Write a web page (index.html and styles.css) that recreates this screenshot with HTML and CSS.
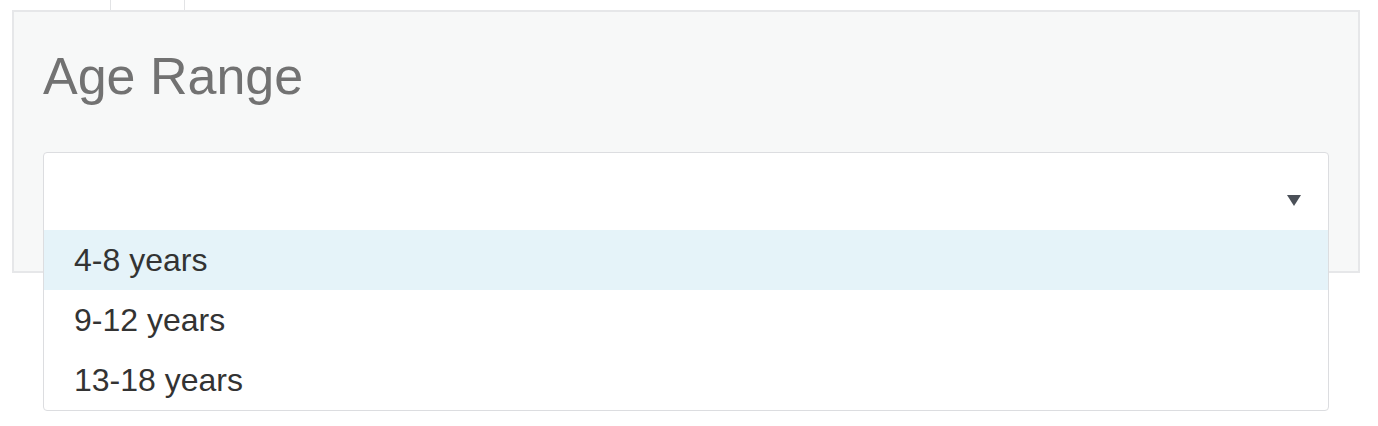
FILE: index.html
```html
<!DOCTYPE html>
<html lang="en">
<head>
    <meta charset="UTF-8">
    <meta name="viewport" content="width=device-width, initial-scale=1.0">
    <title>Age Range</title>
    <link rel="stylesheet" href="styles.css">
</head>
<body>
    <div class="tabs">
        <div class="tab tab-first"></div>
        <div class="tab"></div>
        <div class="tab tab-rest"></div>
    </div>

    <div class="panel">
        <h2 class="panel-title">Age Range</h2>

        <div class="field">
            <div class="select">
                <div class="select-head">
                    <span class="select-value"></span>
                    <svg class="caret" viewBox="0 0 16 12">
                        <polygon points="1,1 15,1 8,12" fill="currentColor"></polygon>
                    </svg>
                </div>
                <!-- open dropdown list hangs over the panel's bottom edge -->
                <ul class="options">
                    <li class="option active">4-8 years</li>
                    <li class="option">9-12 years</li>
                    <li class="option">13-18 years</li>
                </ul>
            </div>
        </div>
    </div>
</body>
</html>
```

FILE: styles.css
```css
* {
    margin: 0;
    padding: 0;
    box-sizing: border-box;
    font-family: "Liberation Sans", Arial, sans-serif;
}

html, body {
    min-height: 100vh;
}

body {
    background: #fff;
}

.tabs {
    display: flex;
    height: 10px;
}

.tab {
    width: 74px;
    border-right: 1px solid #e2e3e5;
}

.tab-first {
    width: 111px;
}

.tab-rest {
    flex: 1;
    border-right: none;
}

.panel {
    width: 1348px;
    margin-left: 12px;
    background: #f7f8f8;
    border: 2px solid #e6e7e9;
    padding: 36px 29px 42px;
}

.panel-title {
    font-size: 52px;
    font-weight: normal;
    line-height: 57px;
    color: #727272;
    margin-bottom: 47px;
}

.field {
    position: relative;
    height: 77px;
}

.select {
    position: absolute;
    top: 0;
    left: 0;
    right: 0;
    z-index: 1;
    background: #fff;
    border: 1px solid #dcdde0;
    border-radius: 4px;
}

.select-head {
    height: 77px;
    display: flex;
    align-items: center;
    justify-content: space-between;
    padding: 0 26px 0 30px;
}

.caret {
    width: 16px;
    height: 12px;
    color: #4b5058;
    margin-top: 16px;
}

.options {
    list-style: none;
}

.option {
    height: 60px;
    line-height: 60px;
    padding-left: 30px;
    font-size: 32px;
    color: #333;
}

.option.active {
    background: #e5f3f9;
}
```
